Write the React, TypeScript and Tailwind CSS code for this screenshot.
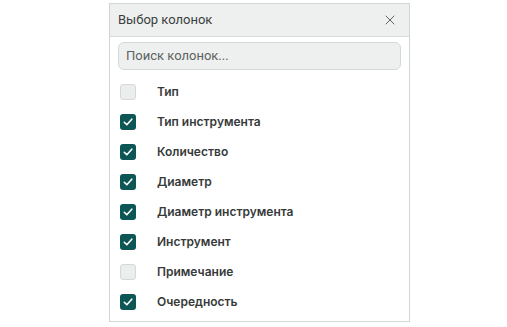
import React from "react";

const ColumnPicker: React.FC = () => {
  const columns = [
    { id: 1, label: "Тип", checked: false },
    { id: 2, label: "Тип инструмента", checked: true },
    { id: 3, label: "Количество", checked: true },
    { id: 4, label: "Диаметр", checked: true },
    { id: 5, label: "Диаметр инструмента", checked: true },
    { id: 6, label: "Инструмент", checked: true },
    { id: 7, label: "Примечание", checked: false },
    { id: 8, label: "Очередность", checked: true },
  ];
  return (
    <div className="min-h-[327px] bg-white pl-[109px] pt-[3px]">
      <div className="w-[301px] border border-[#cfd6d4] bg-white">
        <div className="flex h-[33px] items-center justify-between border-b border-[#d6dcda] bg-[#eef0ef] pl-[8px] pr-[14px]">
          <span className="font-['Roboto',sans-serif] text-[13px] text-[#3a3f3e]">
            Выбор колонок
          </span>
          <svg width="10" height="10" viewBox="0 0 10 10" className="text-[#5f6664]">
            <path d="M1 1 L9 9 M9 1 L1 9" stroke="currentColor" strokeWidth="1" strokeLinecap="round" />
          </svg>
        </div>
        <div className="px-[8px] pt-[5px] pb-[4px]">
          <div className="flex h-[28px] items-center rounded-md border border-[#d3d9d7] bg-[#eef0ef] px-[7px]">
            <span className="font-['Roboto',sans-serif] text-[13px] text-[#5b6260]">
              Поиск колонок...
            </span>
          </div>
          <div className="mt-[7px] flex flex-col">
            {columns.map((col) => (
              <div key={col.id} className="flex h-[30px] items-center">
                {col.checked ? (
                  <div className="ml-[2px] flex h-[16px] w-[16px] items-center justify-center rounded-[3px] bg-[#0d5656]">
                    <svg width="12" height="12" viewBox="0 0 12 12">
                      <path d="M2.3 6.3 L4.8 8.8 L9.8 3.2" fill="none" stroke="white" strokeWidth="1.6" strokeLinecap="round" strokeLinejoin="round" />
                    </svg>
                  </div>
                ) : (
                  <div className="ml-[2px] h-[16px] w-[16px] rounded-[3px] border border-[#d3d9d7] bg-[#eceeed]" />
                )}
                <span className="ml-[21px] font-['Inter',sans-serif] text-[12px] font-semibold text-[#363b3a]">
                  {col.label}
                </span>
              </div>
            ))}
          </div>
        </div>
      </div>
    </div>
  );
};

export default ColumnPicker;
